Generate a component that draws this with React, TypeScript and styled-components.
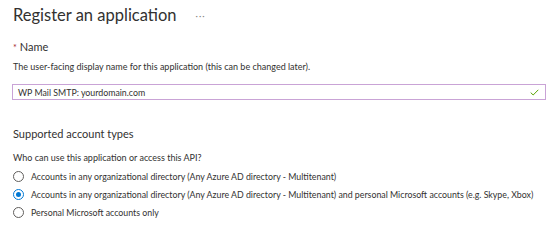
import React from "react";
import styled, { createGlobalStyle } from "styled-components";

const Global = createGlobalStyle`
  html, body { margin: 0; padding: 0; background: #ffffff; }
  body { font-family: Lato, "Noto Sans", Arial, sans-serif; color: #323130; }
`;

const Page = styled.div`
  width: 550px;
  height: 221px;
  box-sizing: border-box;
  padding: 5px 5px 0 12px;
  overflow: hidden;
  display: flex;
  flex-direction: column;
`;

const TitleRow = styled.div`
  display: flex;
  align-items: center;
  gap: 19px;
  height: 20px;
`;

const Title = styled.h1`
  margin: 0;
  font-size: 16.5px;
  line-height: 20px;
  font-weight: 400;
  color: #323130;
  padding-left: 1px;
`;

const More = styled.span`
  font-size: 9px;
  color: #8a8886;
  letter-spacing: 1px;
  line-height: 1;
`;

const FieldLabel = styled.div`
  margin-top: 15px;
  font-size: 11px;
  line-height: 14px;
  color: #323130;
  display: flex;
  align-items: baseline;
  gap: 3px;
  padding-left: 1px;
`;

const Required = styled.span`
  color: #a4262c;
  font-size: 9px;
`;

const Hint = styled.div<{ $top: number }>`
  margin-top: ${(p) => p.$top}px;
  font-size: 9px;
  line-height: 12px;
  color: #323130;
  white-space: nowrap;
  padding-left: 1px;
`;

const InputBox = styled.div`
  margin-top: 11px;
  height: 16px;
  width: 534px;
  box-sizing: border-box;
  border: 1px solid #c9a3d6;
  display: flex;
  align-items: center;
  justify-content: space-between;
  padding: 0 6px 0 5px;
  font-size: 8.8px;
  color: #323130;
`;

const SectionTitle = styled.div`
  margin-top: 27px;
  font-size: 11px;
  line-height: 14px;
  color: #323130;
  padding-left: 1px;
`;

const RadioList = styled.div`
  margin-top: 3px;
  display: flex;
  flex-direction: column;
`;

const RadioRow = styled.label`
  display: flex;
  align-items: center;
  gap: 7px;
  height: 18px;
  font-size: 8.8px;
  color: #323130;
  white-space: nowrap;
`;

const Circle = styled.span<{ $checked: boolean }>`
  width: 11px;
  height: 11px;
  flex: none;
  box-sizing: border-box;
  border-radius: 50%;
  border: 1px solid ${(p) => (p.$checked ? "#0078d4" : "#605e5c")};
  display: flex;
  align-items: center;
  justify-content: center;
  margin-left: 1px;
  &::after {
    content: "";
    width: 5px;
    height: 5px;
    border-radius: 50%;
    background: #0078d4;
    display: ${(p) => (p.$checked ? "block" : "none")};
  }
`;

const options = [
  { label: "Accounts in any organizational directory (Any Azure AD directory - Multitenant)", checked: false },
  {
    label:
      "Accounts in any organizational directory (Any Azure AD directory - Multitenant) and personal Microsoft accounts (e.g. Skype, Xbox)",
    checked: true,
  },
  { label: "Personal Microsoft accounts only", checked: false },
];

export default function App() {
  return (
    <>
      <Global />
      <Page>
        <TitleRow>
          <Title>Register an application</Title>
          <More>···</More>
        </TitleRow>
        <FieldLabel>
          <Required>*</Required>
          <span>Name</span>
        </FieldLabel>
        <Hint $top={6}>The user-facing display name for this application (this can be changed later).</Hint>
        <InputBox>
          <span>WP Mail SMTP: yourdomain.com</span>
          <svg width="9" height="7" viewBox="0 0 9 7" fill="none">
            <path d="M0.7 3.6 L3.2 6 L8.3 0.8" stroke="#57a300" strokeWidth="1" />
          </svg>
        </InputBox>
        <SectionTitle>Supported account types</SectionTitle>
        <Hint $top={11}>Who can use this application or access this API?</Hint>
        <RadioList>
          {options.map((o) => (
            <RadioRow key={o.label}>
              <Circle $checked={o.checked} />
              <span>{o.label}</span>
            </RadioRow>
          ))}
        </RadioList>
      </Page>
    </>
  );
}
